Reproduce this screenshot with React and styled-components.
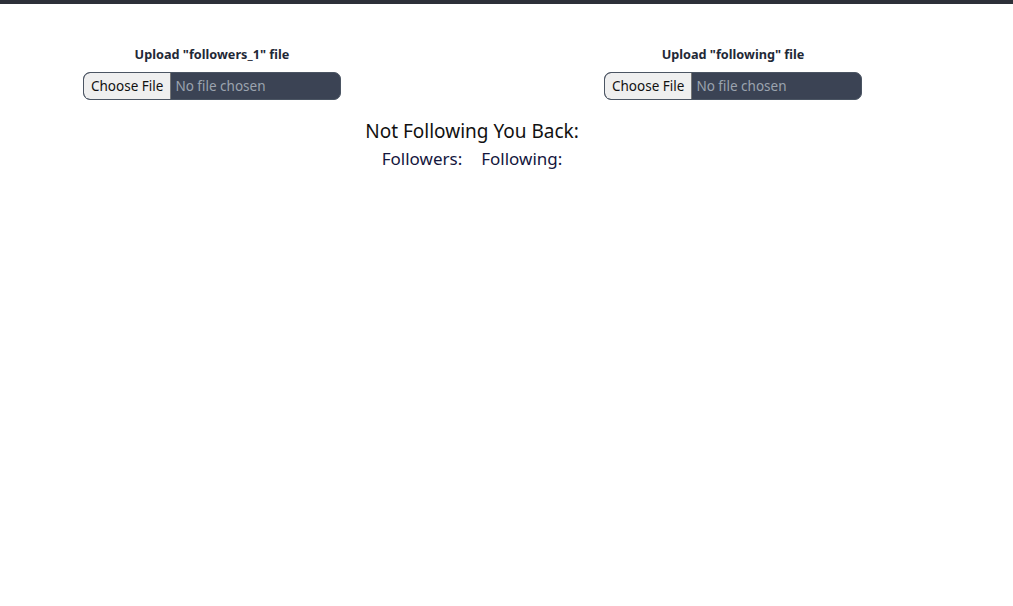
import React from "react";
import styled, { createGlobalStyle } from "styled-components";

const Global = createGlobalStyle`
  html, body { margin: 0; padding: 0; background: #ffffff; }
  body { font-family: "Noto Sans", "Open Sans", sans-serif; color: #111827; }
`;

const TopBar = styled.div`
  height: 4px;
  background: #2d3039;
`;

const Page = styled.main`
  width: 944px;
  display: flex;
  flex-direction: column;
`;

const Uploads = styled.div`
  display: flex;
  gap: 263px;
  padding: 41px 0 0 83px;
`;

const UploadColumn = styled.div`
  width: 258px;
  display: flex;
  flex-direction: column;
  align-items: center;
  gap: 9px;
`;

const UploadTitle = styled.h2`
  margin: 0;
  font-size: 12.7px;
  font-weight: 700;
  line-height: 18px;
  color: #1f2937;
`;

const FileBox = styled.label`
  position: relative;
  width: 258px;
  height: 28px;
  box-sizing: border-box;
  display: flex;
  align-items: stretch;
  background: #3b4354;
  border: 1px solid #4b5563;
  border-radius: 7px;
  overflow: hidden;
  cursor: pointer;
`;

const HiddenInput = styled.input`
  position: absolute;
  width: 1px;
  height: 1px;
  opacity: 0;
  pointer-events: none;
`;

const ChooseButton = styled.span`
  display: flex;
  align-items: center;
  padding: 0 7px;
  background: #efefef;
  border-right: 1px solid #767676;
  border-radius: 6px 0 0 6px;
  font-size: 13.5px;
  color: #111;
`;

const FileName = styled.span`
  display: flex;
  align-items: center;
  padding-left: 4px;
  font-size: 13.5px;
  color: #9ca3af;
`;

const Results = styled.section`
  display: flex;
  flex-direction: column;
  align-items: center;
  padding-top: 17px;
`;

const ResultsTitle = styled.h1`
  margin: 0;
  font-size: 19px;
  font-weight: 400;
  line-height: 28px;
  color: #111;
`;

const Columns = styled.div`
  display: flex;
  gap: 19px;
`;

const ColumnHead = styled.h3`
  margin: 0;
  font-size: 17px;
  font-weight: 400;
  line-height: 28px;
  color: ${(p) => p.$color};
`;

function Upload({ title, id }) {
  return (
    <UploadColumn>
      <UploadTitle>{title}</UploadTitle>
      <FileBox htmlFor={id}>
        <HiddenInput id={id} type="file" />
        <ChooseButton>Choose File</ChooseButton>
        <FileName>No file chosen</FileName>
      </FileBox>
    </UploadColumn>
  );
}

export default function App() {
  return (
    <>
      <Global />
      <TopBar />
      <Page>
        <Uploads>
          <Upload id="followers" title={'Upload "followers_1" file'} />
          <Upload id="following" title={'Upload "following" file'} />
        </Uploads>
        <Results>
          <ResultsTitle>Not Following You Back:</ResultsTitle>
          <Columns>
            <ColumnHead $color="#14163d">Followers:</ColumnHead>
            <ColumnHead $color="#14163d">Following:</ColumnHead>
          </Columns>
        </Results>
      </Page>
    </>
  );
}
